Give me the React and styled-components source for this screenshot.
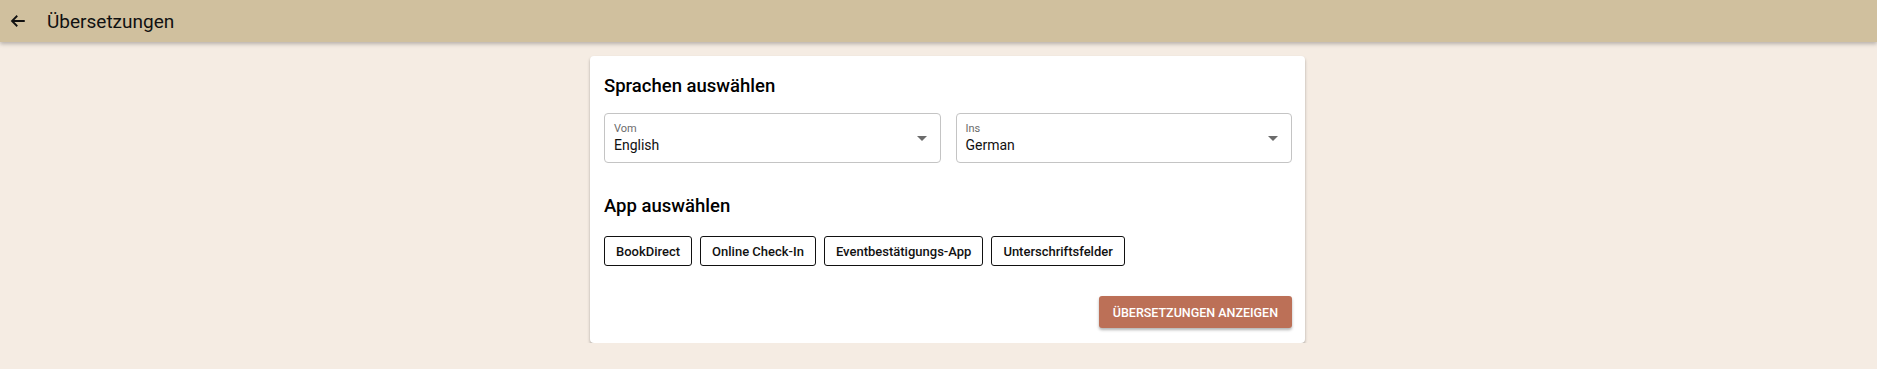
import React from 'react';
import styled, { createGlobalStyle } from 'styled-components';

const GlobalStyle = createGlobalStyle`
  body {
    margin: 0;
    background: #f5ece3;
    font-family: Roboto, "Liberation Sans", sans-serif;
    color: #000;
  }
`;

const Header = styled.header`
  height: 42px;
  background: #d0c09e;
  display: flex;
  align-items: center;
  padding-left: 6px;
  box-shadow: 0 2px 4px rgba(0, 0, 0, 0.25);
`;

const BackButton = styled.button`
  border: 0;
  background: none;
  padding: 0;
  width: 24px;
  height: 24px;
  display: flex;
  align-items: center;
  justify-content: center;
  color: #111;
  cursor: pointer;
`;

const Title = styled.h1`
  margin: 0 0 0 17px;
  font-size: 19px;
  font-weight: 400;
  color: #111;
`;

const Main = styled.main`
  display: flex;
  justify-content: center;
  padding: 14px 0 0 18px;
`;

const Card = styled.section`
  width: 715px;
  box-sizing: border-box;
  background: #fff;
  border-radius: 4px;
  box-shadow: 0 2px 3px rgba(0, 0, 0, 0.3);
  padding: 16px 13px 15px 14px;
`;

const SectionTitle = styled.h2`
  margin: 0;
  font-size: 18.5px;
  font-weight: 500;
  line-height: 28px;
`;

const SelectRow = styled.div`
  display: flex;
  gap: 15px;
  margin-top: 13px;
`;

const Select = styled.div`
  flex: 1;
  height: 50px;
  box-sizing: border-box;
  border: 1px solid #c4c4c4;
  border-radius: 4px;
  display: flex;
  align-items: center;
  padding: 0 10px 0 9px;
`;

const SelectText = styled.div`
  flex: 1;
  display: flex;
  flex-direction: column;
`;

const SelectLabel = styled.span`
  font-size: 11px;
  color: #6b6b6b;
  line-height: 14px;
`;

const SelectValue = styled.span`
  font-size: 14px;
  line-height: 18px;
  color: #111;
`;

const Caret = styled.span`
  width: 0;
  height: 0;
  border-left: 5px solid transparent;
  border-right: 5px solid transparent;
  border-top: 5px solid #6b6b6b;
  margin-right: 3px;
`;

const AppTitle = styled(SectionTitle)`
  margin-top: 29px;
`;

const AppRow = styled.div`
  display: flex;
  gap: 8px;
  margin-top: 16px;
`;

const AppButton = styled.button`
  height: 30px;
  padding: 0 11px;
  background: #fff;
  border: 1px solid #111;
  border-radius: 3px;
  font-family: Roboto, "Liberation Sans", sans-serif;
  font-size: 13px;
  font-weight: 500;
  color: #111;
  cursor: pointer;
`;

const Actions = styled.div`
  display: flex;
  justify-content: flex-end;
  margin-top: 30px;
`;

const PrimaryButton = styled.button`
  height: 32px;
  padding: 0 14px;
  background: #bc7057;
  color: #fff;
  border: 0;
  border-radius: 3px;
  font-family: Roboto, "Liberation Sans", sans-serif;
  font-size: 12.5px;
  font-weight: 500;
  text-transform: uppercase;
  box-shadow: 0 2px 3px rgba(0, 0, 0, 0.3);
  cursor: pointer;
`;

const apps = ['BookDirect', 'Online Check-In', 'Eventbestätigungs-App', 'Unterschriftsfelder'];

function LanguageSelect({ label, value }) {
  return (
    <Select>
      <SelectText>
        <SelectLabel>{label}</SelectLabel>
        <SelectValue>{value}</SelectValue>
      </SelectText>
      <Caret />
    </Select>
  );
}

export default function App() {
  return (
    <>
      <GlobalStyle />
      <Header>
        <BackButton aria-label="Zurück">
          <svg width="18" height="18" viewBox="0 0 24 24" fill="none" stroke="currentColor" strokeWidth="2.4">
            <path d="M21 12H4M11 5l-7 7 7 7" />
          </svg>
        </BackButton>
        <Title>Übersetzungen</Title>
      </Header>
      <Main>
        <Card>
          <SectionTitle>Sprachen auswählen</SectionTitle>
          <SelectRow>
            <LanguageSelect label="Vom" value="English" />
            <LanguageSelect label="Ins" value="German" />
          </SelectRow>
          <AppTitle>App auswählen</AppTitle>
          <AppRow>
            {apps.map((a) => (
              <AppButton key={a}>{a}</AppButton>
            ))}
          </AppRow>
          <Actions>
            <PrimaryButton>Übersetzungen anzeigen</PrimaryButton>
          </Actions>
        </Card>
      </Main>
    </>
  );
}
